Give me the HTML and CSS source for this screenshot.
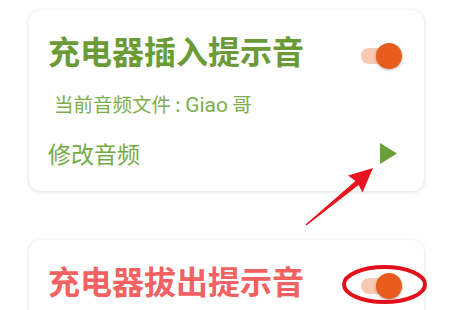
FILE: index.html
```html
<!DOCTYPE html>
<html lang="zh">
<head>
<meta charset="utf-8">
<link rel="stylesheet" href="styles.css">
</head>
<body>
<div class="page">
  <div class="card">
    <div class="head">
      <div class="title green">充电器插入提示音</div>
      <div class="switch"><span class="track"></span><span class="thumb"></span></div>
    </div>
    <div class="sub">当前音频文件 : <span class="latin">Giao</span> 哥</div>
    <div class="foot">
      <div class="edit">修改音频</div>
      <svg class="play" width="17" height="21" viewBox="0 0 17 21"><polygon points="0,0 17,10.5 0,21" fill="#6a9e36"/></svg>
    </div>
  </div>
  <div class="card card2">
    <div class="head">
      <div class="title red">充电器拔出提示音</div>
      <div class="switch"><span class="track"></span><span class="thumb"></span></div>
    </div>
  </div>
  <svg class="marks" width="450" height="310" viewBox="0 0 450 310">
    <polygon points="373,168 348,175.5 355.4,181.1 305.5,224.4 306.5,225.6 358.6,184.9 362.5,192.5" fill="#e8141f"/>
    <ellipse cx="384.5" cy="284.5" rx="40.5" ry="17.5" fill="none" stroke="#e3101b" stroke-width="4"/>
  </svg>
</div>
</body>
</html>
```

FILE: styles.css
```css
html, body {
  margin: 0;
  padding: 0;
  background: #ffffff;
}
.page {
  position: relative;
  width: 450px;
  height: 310px;
  overflow: hidden;
  padding-top: 10px;
  box-sizing: border-box;
  font-family: "Noto Sans CJK SC", sans-serif;
}
.card {
  margin-left: 29px;
  width: 395px;
  height: 181px;
  box-sizing: border-box;
  padding: 22px 27px 0 19px;
  background: #fff;
  border-radius: 12px;
  box-shadow: 0 1px 4px rgba(0,0,0,0.13), 0 0 1px rgba(0,0,0,0.06);
}
.card2 {
  margin-top: 49px;
}
.head {
  display: flex;
  justify-content: space-between;
  align-items: flex-start;
}
.title {
  font-size: 32px;
  line-height: 36px;
  font-weight: 700;
}
.green { color: #6a9b37; }
.red { color: #f26262; }
.switch {
  position: relative;
  width: 41px;
  height: 26px;
  margin-top: 11px;
  margin-right: -5px;
}
.track {
  position: absolute;
  left: 0;
  top: 5px;
  width: 36px;
  height: 16px;
  border-radius: 8px;
  background: #f8c9b3;
}
.thumb {
  position: absolute;
  left: 15px;
  top: 0;
  width: 26px;
  height: 26px;
  border-radius: 50%;
  background: #e85c1d;
  box-shadow: 0 1px 3px rgba(0,0,0,0.3);
}
.sub {
  margin-top: 23px;
  padding-left: 6px;
  font-size: 19.5px;
  line-height: 24px;
  color: #7caf4c;
}
.latin {
  font-family: Roboto, sans-serif;
  font-size: 21px;
}
.foot {
  margin-top: 22px;
  display: flex;
  justify-content: space-between;
  align-items: center;
  height: 28px;
}
.edit {
  font-size: 23px;
  line-height: 28px;
  color: #76aa45;
}
.play {
  display: block;
  margin-right: 0;
}
.marks {
  position: absolute;
  left: 0;
  top: 0;
}
```
